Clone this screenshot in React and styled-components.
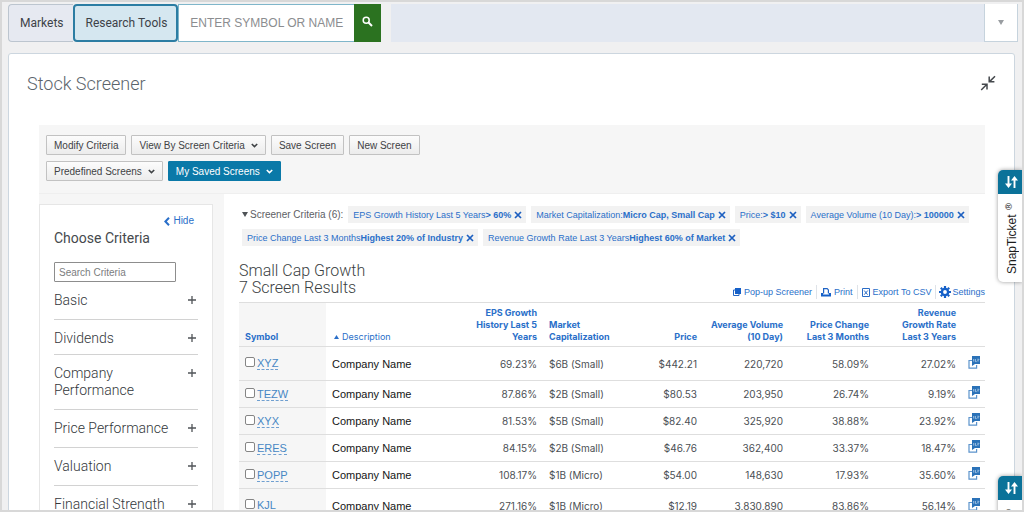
import styled, { createGlobalStyle, ThemeProvider } from "styled-components"

const theme = {
    color: {
        link: "#2a6fc9",
        teal: "#0a79a8",
        text: "#4b4f54",
        soft: "#f6f6f6",
        line: "#dedede",
    },
    font: {
        body: `"Liberation Sans", Arial, sans-serif`,
        heading: `Roboto, "Liberation Sans", sans-serif`,
        data: `Inter, "Liberation Sans", sans-serif`,
    },
}

const GlobalStyle = createGlobalStyle`
    *, *::before, *::after {
        box-sizing: border-box;
    }

    body {
        margin: 0;
        font-family: ${theme.font.body};
        color: ${theme.color.text};
    }

    button, input {
        font-family: inherit;
        margin: 0;
    }

    button {
        cursor: pointer;
    }

    a {
        color: inherit;
        text-decoration: none;
    }

    svg {
        display: block;
        flex: none;
    }
`

const Frame = styled.div`
    position: relative;
    height: 100vh;
    overflow: hidden;
    border: 2px solid #d8d8d8;
    background-color: #f0f0f1;
    padding: 2px 4px 0 6px;
`

const TopBar = styled.header`
    display: flex;
    height: 38px;
`

const TopNav = styled.nav`
    display: flex;
`

const TopTab = styled.a`
    display: flex;
    align-items: center;
    padding: 0 9px 0 11px;
    font-family: ${({theme}) => theme.font.heading};
    font-size: 12px;
    color: #3d4248;
    border: ${({$active}) => $active ? "2px solid #2c7da3" : "1px solid #bcc5cf"};
    border-right-width: ${({$active}) => $active ? "2px" : "0"};
    border-radius: ${({$active}) => $active ? "4px" : "4px 0 0 4px"};
    background-color: ${({$active}) => $active ? "#d5e7f0" : "#e6e9f1"};
`

const SymbolSearch = styled.form`
    display: flex;
    width: 203px;
`

const SymbolInput = styled.input`
    flex: 1;
    min-width: 0;
    padding: 0 0 0 11px;
    border: 1px solid #7fb6ca;
    border-right: 0;
    font-size: 12px;
    background-color: white;

    &::placeholder {
        color: #8b8d90;
        opacity: 1;
    }
`

const SearchButton = styled.button`
    display: flex;
    justify-content: center;
    padding: 12px 0 0;
    width: 27px;
    border: 0;
    background-color: #2b7220;
`

const TopFill = styled.div`
    flex: 1;
    margin-left: 10px;
    background-color: #e3e8f1;
`

const TopToggle = styled.button`
    width: 34px;
    padding: 0;
    border: 1px solid #c6d3dd;
    border-top: 0;
    background-color: white;
    display: flex;
    align-items: center;
    justify-content: center;
`

const Panel = styled.main`
    margin: 11px 3px 0 0;
    min-height: 100vh;
    padding: 0 29px 0 30px;
    border: 1px solid #ccd6df;
    border-radius: 3px 3px 0 0;
    background-color: white;
`

const PanelHead = styled.div`
    display: flex;
    justify-content: space-between;
    align-items: flex-start;
    height: 71px;
    margin: 0 -11px 0 -12px;
    padding-top: 20px;
`

const PanelTitle = styled.h1`
    margin: 0;
    font-family: ${({theme}) => theme.font.heading};
    font-weight: 300;
    font-size: 18px;
    line-height: 20px;
    color: #5b646c;
`

const IconButton = styled.button`
    display: flex;
    padding: 1px 0 0;
    border: 0;
    background: none;
`

const Toolbar = styled.div`
    display: flex;
    flex-direction: column;
    gap: 6px;
    padding: 10px 7px 12px;
    border-bottom: 1px solid #efefef;
    background-color: ${({theme}) => theme.color.soft};
`

const ToolbarRow = styled.div`
    display: flex;
    gap: 5px;
`

const ToolButton = styled.button`
    display: flex;
    align-items: center;
    gap: 6px;
    height: 20px;
    padding: 0 7px;
    border: 1px solid ${({$primary}) => $primary ? "#0a79a8" : "#c2c2c2"};
    border-radius: 1px;
    font-size: 10px;
    white-space: nowrap;
    color: ${({$primary}) => $primary ? "white" : "#3f4245"};
    background: ${({$primary}) => $primary ? "#0a79a8" : "linear-gradient(#fcfcfc, #ececec)"};
`

const Columns = styled.div`
    display: flex;
    align-items: stretch;
`

const Sidebar = styled.aside`
    flex: none;
    width: 185px;
    padding: 10px 11px 0 0;
    background-color: ${({theme}) => theme.color.soft};
`

const SidebarCard = styled.div`
    height: 100%;
    padding: 9px 14px 0;
    border: 1px solid #e6e6e6;
    background-color: white;
`

const HideLink = styled.a`
    display: flex;
    align-items: center;
    justify-content: flex-end;
    gap: 3px;
    padding-right: 4px;
    font-size: 10px;
    line-height: 14px;
    color: ${({theme}) => theme.color.link};
`

const SidebarTitle = styled.h2`
    margin: 1px 0 15px;
    font-family: ${({theme}) => theme.font.heading};
    font-weight: 400;
    font-size: 14px;
    line-height: 18px;
    color: #45494d;
`

const CriteriaInput = styled.input`
    display: block;
    width: 122px;
    height: 20px;
    padding: 0 4px;
    border: 1px solid #8d8d8d;
    border-radius: 1px;
    font-size: 10px;

    &::placeholder {
        color: #7b7d80;
        opacity: 1;
    }
`

const CriteriaList = styled.ul`
    margin: 0;
    padding: 0;
    list-style: none;
`

const CriteriaItem = styled.li`
    border-bottom: 1px solid #d2d2d2;
`

const CriteriaToggle = styled.button`
    display: flex;
    align-items: flex-start;
    justify-content: space-between;
    width: 100%;
    padding: 10px 2px ${({$tight}) => $tight ? "7px" : "10px"} 0;
    border: 0;
    background: none;
    text-align: left;
    font-family: ${({theme}) => theme.font.heading};
    font-weight: 300;
    font-size: 14px;
    line-height: 17px;
    color: #33373b;

    svg {
        margin-top: 4px;
    }
`

const CriteriaName = styled.span`
    max-width: 120px;
`

const Results = styled.section`
    flex: 1;
    min-width: 0;
    padding: 12px 0 0 15px;
`

const Chips = styled.div`
    display: flex;
    flex-wrap: wrap;
    gap: 6px 5px;
    padding-left: 3px;
`

const ChipsLabel = styled.button`
    display: flex;
    align-items: center;
    gap: 2px;
    height: 17px;
    padding: 0;
    border: 0;
    background: none;
    font-size: 10px;
    color: #5d6064;
`

const Chip = styled.button`
    display: flex;
    align-items: center;
    height: 17px;
    padding: 0 4px 0 5px;
    border: 0;
    font-size: 9px;
    white-space: nowrap;
    color: ${({theme}) => theme.color.link};
    background-color: #f2f2f2;

    svg {
        margin-left: 3px;
    }
`

const ResultsHead = styled.div`
    display: flex;
    align-items: flex-end;
    justify-content: space-between;
    margin-top: 16px;
    padding-bottom: 3px;
`

const ResultsTitle = styled.h2`
    margin: 0;
    font-family: ${({theme}) => theme.font.heading};
    font-weight: 300;
    font-size: 16px;
    line-height: 17px;
    color: #3b3f43;
    padding-bottom: 3px;
`

const Actions = styled.div`
    display: flex;
`

const ActionLink = styled.a`
    display: flex;
    align-items: center;
    gap: 3px;
    height: 14px;
    padding: 0 4px;
    font-size: 9px;
    white-space: nowrap;
    color: ${({theme}) => theme.color.link};
    border-right: 1px solid #dfe3e8;

    &:last-child {
        padding: 0 0 0 3px;
        border-right: 0;
        gap: 1px;
    }
`

const Table = styled.table`
    width: 100%;
    table-layout: fixed;
    border-collapse: collapse;
    border-top: 1px solid ${({theme}) => theme.color.line};
`

const HeadCell = styled.th`
    width: ${({$width}) => $width};
    height: 44px;
    padding: 0 6px 3px;
    vertical-align: bottom;
    text-align: ${({$align}) => $align || "left"};
    font-family: ${({theme}) => theme.font.data};
    font-size: 9px;
    line-height: 12px;
    font-weight: ${({$light}) => $light ? 400 : 700};
    color: ${({theme}) => theme.color.link};

    &:first-child {
        background-color: ${({theme}) => theme.color.soft};
    }
`

const SortButton = styled.button`
    display: inline;
    padding: 0;
    border: 0;
    background: none;
    font: inherit;
    color: inherit;
    text-align: inherit;

    svg {
        display: inline-block;
        margin: 0 3px 1px 2px;
    }
`

const Row = styled.tr`
    height: ${({$tall}) => $tall ? "34px" : "27px"};
    border-top: 1px solid ${({theme}) => theme.color.line};
`

const Cell = styled.td`
    padding: 0 6px;
    text-align: ${({$align}) => $align || "left"};
    font-family: ${({theme}) => theme.font.data};
    font-size: 10px;
    line-height: 14px;
    white-space: nowrap;
    color: ${({theme}) => theme.color.text};

    &:first-child {
        background-color: ${({theme}) => theme.color.soft};
    }
`

const NameCell = styled(Cell)`
    font-family: ${({theme}) => theme.font.body};
    font-size: 11px;
    color: #151515;
`

const SymbolPick = styled.div`
    display: flex;
    align-items: center;
    gap: 2px;
`

const Check = styled.input`
    appearance: none;
    width: 10px;
    height: 10px;
    margin: 0 0 3px;
    border: 1px solid #858585;
    border-radius: 2px;
    background-color: white;

    &:checked {
        background-color: ${({theme}) => theme.color.teal};
    }
`

const SymbolLink = styled.a`
    font-family: ${({theme}) => theme.font.body};
    font-size: 11px;
    line-height: 12px;
    color: #4787c4;
    border-bottom: 1px dashed #6f9fd0;
`

const NewsButton = styled.button`
    display: inline-flex;
    padding: 0 0 3px;
    border: 0;
    background: none;
    vertical-align: middle;
`

const SnapTab = styled.div`
    position: absolute;
    right: 0;
    top: ${({$top}) => $top};
    width: 24px;
    border-radius: 5px 0 0 5px;
    background-color: white;
    box-shadow: 0 0 4px rgba(0, 0, 0, 0.4);
    overflow: hidden;
`

const SnapButton = styled.button`
    display: flex;
    align-items: center;
    justify-content: center;
    width: 100%;
    height: 24px;
    padding: 0 0 0 3px;
    border: 0;
    background-color: #0b7299;
`

const SnapLabel = styled.div`
    display: flex;
    align-items: center;
    gap: 3px;
    height: 88px;
    width: 24px;
    padding: 8px 3px 0 0;
    writing-mode: vertical-rl;
    text-orientation: sideways;
    transform: rotate(180deg);
    line-height: 18px;
    font-size: 12px;
    color: #1c1c1c;

    sup {
        font-family: "DejaVu Sans", sans-serif;
        font-size: 9px;
        line-height: 10px;
        padding-left: 5px;
    }
`

const criteria = [
    { name: "Basic" },
    { name: "Dividends", tight: true },
    { name: "Company Performance" },
    { name: "Price Performance" },
    { name: "Valuation" },
    { name: "Financial Strength" },
]

const chips = [
    ["EPS Growth History Last 5 Years", "> 60%"],
    ["Market Capitalization:", "Micro Cap, Small Cap"],
    ["Price:", "> $10"],
    ["Average Volume (10 Day):", "> 100000"],
    ["Price Change Last 3 Months", "Highest 20% of Industry"],
    ["Revenue Growth Rate Last 3 Years", "Highest 60% of Market"],
]

const stocks = [
    ["XYZ", "69.23%", "$6B (Small)", "$442.21", "220,720", "58.09%", "27.02%"],
    ["TEZW", "87.86%", "$2B (Small)", "$80.53", "203,950", "26.74%", "9.19%"],
    ["XYX", "81.53%", "$5B (Small)", "$82.40", "325,920", "38.88%", "23.92%"],
    ["ERES", "84.15%", "$2B (Small)", "$46.76", "362,400", "33.37%", "18.47%"],
    ["POPP", "108.17%", "$1B (Micro)", "$54.00", "148,630", "17.93%", "35.60%"],
    ["KJL", "271.16%", "$1B (Micro)", "$12.19", "3,830,890", "83.86%", "56.14%"],
]

const Chevron = () => (
    <svg width="7" height="5" viewBox="0 0 7 5" fill="none" stroke="currentColor" strokeWidth="1.6">
        <path d="M.8 1l2.7 2.6L6.2 1" />
    </svg>
)

const Cross = () => (
    <svg width="8" height="8" viewBox="0 0 8 8" stroke="#1c5fc0" strokeWidth="1.7">
        <path d="M1 1l6 6M7 1L1 7" />
    </svg>
)

const Collapse = () => (
    <svg width="16" height="16" viewBox="0 0 16 16" fill="none" stroke="#44484c" strokeWidth="1.5">
        <path d="M15 1.2L9.8 6.4M9.2 1.6v5.2h5.2M1.2 15l5.2-5.2M1.8 9.2H7v5.2" />
    </svg>
)

const News = () => (
    <svg width="13" height="13" viewBox="0 0 13 13">
        <path d="M4.5 4.5H1v7.6h7.6V9" fill="none" stroke="#5b93cc" strokeWidth="1.2" />
        <path d="M4 0h8v8H7L4 10z" fill="#2b72b8" />
        <path d="M5.7 3v2.6M7.4 3v2.6h1.3M10 2.6v3M10 4.4l1.2-1.2" fill="none" stroke="#b9d3ec" strokeWidth=".8" />
    </svg>
)

const PopupIcon = () => (
    <svg width="8" height="8" viewBox="0 0 8 8">
        <path d="M2 2H.5v5.5H6V6" fill="none" stroke="#2366c4" />
        <path d="M2 0h6v6H2z" fill="#1560c8" />
    </svg>
)

const PrintIcon = () => (
    <svg width="10" height="9" viewBox="0 0 10 9">
        <path d="M2.6 5.5V.7h3.6l1.2 1.2v3.6" fill="none" stroke="#1f63c4" strokeWidth="1.2" />
        <path d="M0 5h2v1.4h6V5h2v3.6H0z" fill="#1560c8" />
    </svg>
)

const CsvIcon = () => (
    <svg width="8" height="9" viewBox="0 0 8 9" fill="none" stroke="#2a6cc6">
        <path d="M.5.5h7v8h-7z" />
        <path d="M2.2 2.5l3.4 4.2M5.8 2.5L2.2 6.7" />
    </svg>
)

const GearIcon = () => (
    <svg width="12" height="12" viewBox="0 0 12 12" fill="none" stroke="#1560c8">
        <circle cx="6" cy="6" r="3.1" strokeWidth="2.4" />
        <path d="M6 0v2M6 10v2M0 6h2M10 6h2M1.8 1.8l1.4 1.4M8.8 8.8l1.4 1.4M10.2 1.8L8.8 3.2M3.2 8.8l-1.4 1.4" strokeWidth="2.2" />
    </svg>
)

function SnapTicket({ top }) {
    return (
        <SnapTab $top={top}>
            <SnapButton aria-label="Open trade ticket">
                <svg width="13" height="14" viewBox="0 0 13 14" fill="none" stroke="white" strokeWidth="1.9">
                    <path d="M3.5 1v9M9.5 13V4" />
                    <path d="M0 8.5h7L3.5 13zM6 5.5h7L9.5 1z" fill="white" stroke="none" />
                </svg>
            </SnapButton>
            <SnapLabel>SnapTicket<sup>®</sup></SnapLabel>
        </SnapTab>
    )
}

function ColumnHead({ children, ...rest }) {
    return (
        <HeadCell scope="col" {...rest}>
            <SortButton>{children}</SortButton>
        </HeadCell>
    )
}

function CriteriaPanel() {
    return (
        <Sidebar>
            <SidebarCard>
                <HideLink href="#hide">
                    <svg width="6" height="9" viewBox="0 0 6 9" fill="none" stroke="currentColor" strokeWidth="2">
                        <path d="M5 .8L1.4 4.5 5 8.2" />
                    </svg>
                    Hide
                </HideLink>
                <SidebarTitle>Choose Criteria</SidebarTitle>
                <CriteriaInput aria-label="Search Criteria" placeholder="Search Criteria" />
                <CriteriaList>
                    {criteria.map(({ name, tight }) => (
                        <CriteriaItem key={name}>
                            <CriteriaToggle $tight={tight} aria-expanded="false">
                                <CriteriaName>{name}</CriteriaName>
                                <svg width="8" height="8" viewBox="0 0 8 8" stroke="#505458" strokeWidth="1.3">
                                    <path d="M4 0v8M0 4h8" />
                                </svg>
                            </CriteriaToggle>
                        </CriteriaItem>
                    ))}
                </CriteriaList>
            </SidebarCard>
        </Sidebar>
    )
}

function ResultsTable() {
    return (
        <Table>
            <thead>
                <tr>
                    <ColumnHead $width="87px">Symbol</ColumnHead>
                    <ColumnHead $light>
                        <svg width="5" height="4" viewBox="0 0 5 4" fill="currentColor"><path d="M2.5 0L5 4H0z" /></svg>
                        Description
                    </ColumnHead>
                    <ColumnHead $width="78px" $align="right">EPS Growth History Last 5 Years</ColumnHead>
                    <ColumnHead $width="88px">Market Capitalization</ColumnHead>
                    <ColumnHead $width="72px" $align="right">Price</ColumnHead>
                    <ColumnHead $width="86px" $align="right">Average Volume (10 Day)</ColumnHead>
                    <ColumnHead $width="86px" $align="right">Price Change Last 3 Months</ColumnHead>
                    <ColumnHead $width="87px" $align="right">Revenue<br />Growth Rate<br />Last 3 Years</ColumnHead>
                    <HeadCell as="td" $width="23px" />
                </tr>
            </thead>
            <tbody>
                {stocks.map(([symbol, eps, cap, price, volume, change, revenue], i) => (
                    <Row key={symbol} $tall={i === 0 || i === stocks.length - 1}>
                        <Cell>
                            <SymbolPick>
                                <Check type="checkbox" aria-label={symbol} />
                                <SymbolLink href={`#${symbol}`}>{symbol}</SymbolLink>
                            </SymbolPick>
                        </Cell>
                        <NameCell>Company Name</NameCell>
                        <Cell $align="right">{eps}</Cell>
                        <Cell>{cap}</Cell>
                        <Cell $align="right">{price}</Cell>
                        <Cell $align="right">{volume}</Cell>
                        <Cell $align="right">{change}</Cell>
                        <Cell $align="right">{revenue}</Cell>
                        <Cell>
                            <NewsButton aria-label={`${symbol} actions`}><News /></NewsButton>
                        </Cell>
                    </Row>
                ))}
            </tbody>
        </Table>
    )
}

function App() {
    return (
        <ThemeProvider theme={theme}>
            <GlobalStyle />
            <Frame>
                <TopBar>
                    <TopNav>
                        <TopTab href="#markets">Markets</TopTab>
                        <TopTab href="#research" $active>Research Tools</TopTab>
                    </TopNav>
                    <SymbolSearch onSubmit={(e) => e.preventDefault()}>
                        <SymbolInput aria-label="Enter symbol or name" placeholder="ENTER SYMBOL OR NAME" />
                        <SearchButton aria-label="Search">
                            <svg width="11" height="11" viewBox="0 0 11 11" fill="none" stroke="white">
                                <circle cx="4.2" cy="4.2" r="3" strokeWidth="1.5" />
                                <path d="M6.5 6.5l3.5 3.5" strokeWidth="2" />
                            </svg>
                        </SearchButton>
                    </SymbolSearch>
                    <TopFill />
                    <TopToggle aria-label="More">
                        <svg width="6" height="5" viewBox="0 0 6 5" fill="#999da1"><path d="M0 0h6L3 5z" /></svg>
                    </TopToggle>
                </TopBar>
                <Panel>
                    <PanelHead>
                        <PanelTitle>Stock Screener</PanelTitle>
                        <IconButton aria-label="Collapse"><Collapse /></IconButton>
                    </PanelHead>
                    <Toolbar>
                        <ToolbarRow>
                            <ToolButton>Modify Criteria</ToolButton>
                            <ToolButton aria-haspopup="menu">View By Screen Criteria <Chevron /></ToolButton>
                            <ToolButton>Save Screen</ToolButton>
                            <ToolButton>New Screen</ToolButton>
                        </ToolbarRow>
                        <ToolbarRow>
                            <ToolButton aria-haspopup="menu">Predefined Screens <Chevron /></ToolButton>
                            <ToolButton aria-haspopup="menu" $primary>My Saved Screens <Chevron /></ToolButton>
                        </ToolbarRow>
                    </Toolbar>
                    <Columns>
                        <CriteriaPanel />
                        <Results>
                            <Chips>
                                <ChipsLabel aria-expanded="true">
                                    <svg width="6" height="5" viewBox="0 0 6 5" fill="#4f5357"><path d="M0 0h6L3 5z" /></svg>
                                    Screener Criteria (6):
                                </ChipsLabel>
                                {chips.map(([label, value]) => (
                                    <Chip key={label}>{label}<b>{value}</b><Cross /></Chip>
                                ))}
                            </Chips>
                            <ResultsHead>
                                <ResultsTitle>Small Cap Growth<br />7 Screen Results</ResultsTitle>
                                <Actions>
                                    <ActionLink href="#popup"><PopupIcon />Pop-up Screener</ActionLink>
                                    <ActionLink href="#print"><PrintIcon />Print</ActionLink>
                                    <ActionLink href="#csv"><CsvIcon />Export To CSV</ActionLink>
                                    <ActionLink href="#settings"><GearIcon />Settings</ActionLink>
                                </Actions>
                            </ResultsHead>
                            <ResultsTable />
                        </Results>
                    </Columns>
                </Panel>
                <SnapTicket top="168px" />
                <SnapTicket top="474px" />
            </Frame>
        </ThemeProvider>
    )
}

export default App
